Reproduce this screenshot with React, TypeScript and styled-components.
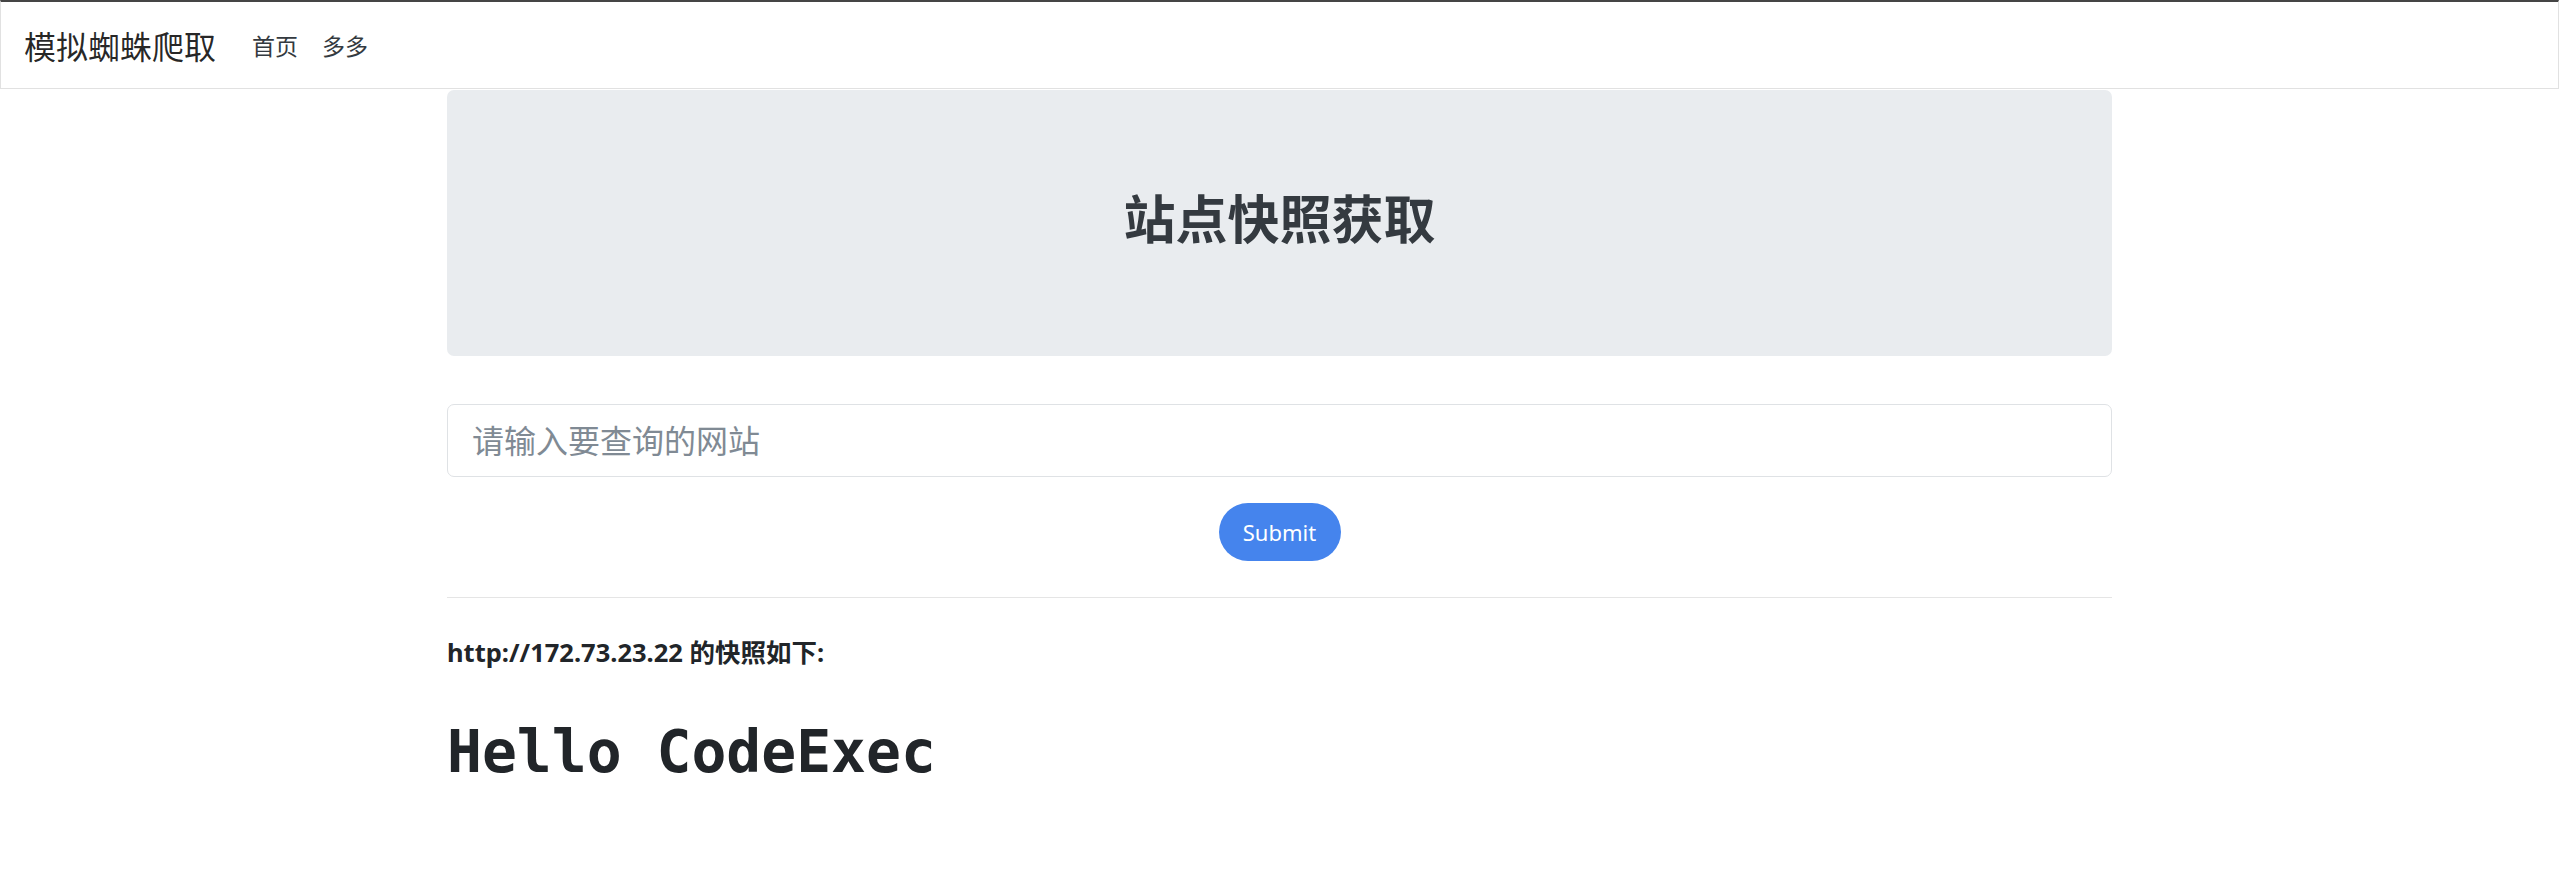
import React from "react";
import styled, { createGlobalStyle } from "styled-components";

const GlobalStyle = createGlobalStyle`
  html, body {
    margin: 0;
    padding: 0;
    background: #ffffff;
  }
  body {
    font-family: "Noto Sans", "Noto Sans CJK SC", sans-serif;
    color: #212529;
  }
  * { box-sizing: border-box; }
`;

const Navbar = styled.nav`
  display: flex;
  align-items: center;
  height: 89px;
  padding: 0 23px;
  border-top: 2px solid #454545;
  border-left: 1px solid #e1e1e1;
  border-right: 1px solid #e1e1e1;
  border-bottom: 1px solid #e1e1e1;
`;

const Brand = styled.a`
  font-family: "Noto Sans CJK SC", sans-serif;
  font-size: 32px;
  line-height: 1.5;
  color: rgba(0, 0, 0, 0.85);
  text-decoration: none;
  margin-right: 24px;
`;

const NavList = styled.div`
  display: flex;
  align-items: center;
`;

const NavLink = styled.a`
  font-family: "Noto Sans CJK SC", sans-serif;
  font-size: 23px;
  line-height: 1.5;
  color: #343a40;
  text-decoration: none;
  padding: 0 12px;
`;

const Container = styled.main`
  width: 1665px;
  margin: 0 auto;
  padding-top: 1px;
`;

const Jumbotron = styled.section`
  background: #e9ecef;
  border-radius: 7px;
  padding: 96px 48px 96px;
  margin-bottom: 48px;
  text-align: center;
`;

const Title = styled.h1`
  margin: 0 0 12px;
  font-family: "Noto Sans CJK SC", sans-serif;
  font-size: 52px;
  line-height: 62px;
  font-weight: 700;
  color: #343a40;
`;

const Form = styled.form`
  display: flex;
  flex-direction: column;
  align-items: center;
  gap: 26px;
`;

const Input = styled.input`
  width: 100%;
  height: 73px;
  padding: 0 24px;
  font-family: "Noto Sans", "Noto Sans CJK SC", sans-serif;
  font-size: 32px;
  color: #495057;
  border: 1px solid #dfe2e5;
  border-radius: 7px;
  outline: none;
  &::placeholder {
    color: #808a94;
  }
`;

const SubmitButton = styled.button`
  width: 122px;
  height: 58px;
  border: none;
  border-radius: 29px;
  background: #4584ed;
  color: #ffffff;
  font-family: "Noto Sans", sans-serif;
  font-size: 22px;
  cursor: pointer;
`;

const Divider = styled.hr`
  margin: 36px 0 0;
  border: 0;
  border-top: 1px solid #e5e5e5;
`;

const ResultLabel = styled.p`
  margin: 35px 0 0;
  font-family: "Noto Sans", "Noto Sans CJK SC", sans-serif;
  font-size: 25.5px;
  line-height: 38px;
  font-weight: 700;
  color: #212529;
`;

const Snapshot = styled.h1`
  margin: 45px 0 0;
  font-family: "DejaVu Sans Mono", monospace;
  font-size: 58px;
  line-height: 72px;
  font-weight: 700;
  color: #212529;
`;

export default function App() {
  return (
    <>
      <GlobalStyle />
      <Navbar>
        <Brand href="#">模拟蜘蛛爬取</Brand>
        <NavList>
          <NavLink href="#">首页</NavLink>
          <NavLink href="#">多多</NavLink>
        </NavList>
      </Navbar>
      <Container>
        <Jumbotron>
          <Title>站点快照获取</Title>
        </Jumbotron>
        <Form onSubmit={(e) => e.preventDefault()}>
          <Input type="text" placeholder="请输入要查询的网站" />
          <SubmitButton type="submit">Submit</SubmitButton>
        </Form>
        <Divider />
        <ResultLabel>http://172.73.23.22 的快照如下:</ResultLabel>
        <Snapshot>Hello CodeExec</Snapshot>
      </Container>
    </>
  );
}
